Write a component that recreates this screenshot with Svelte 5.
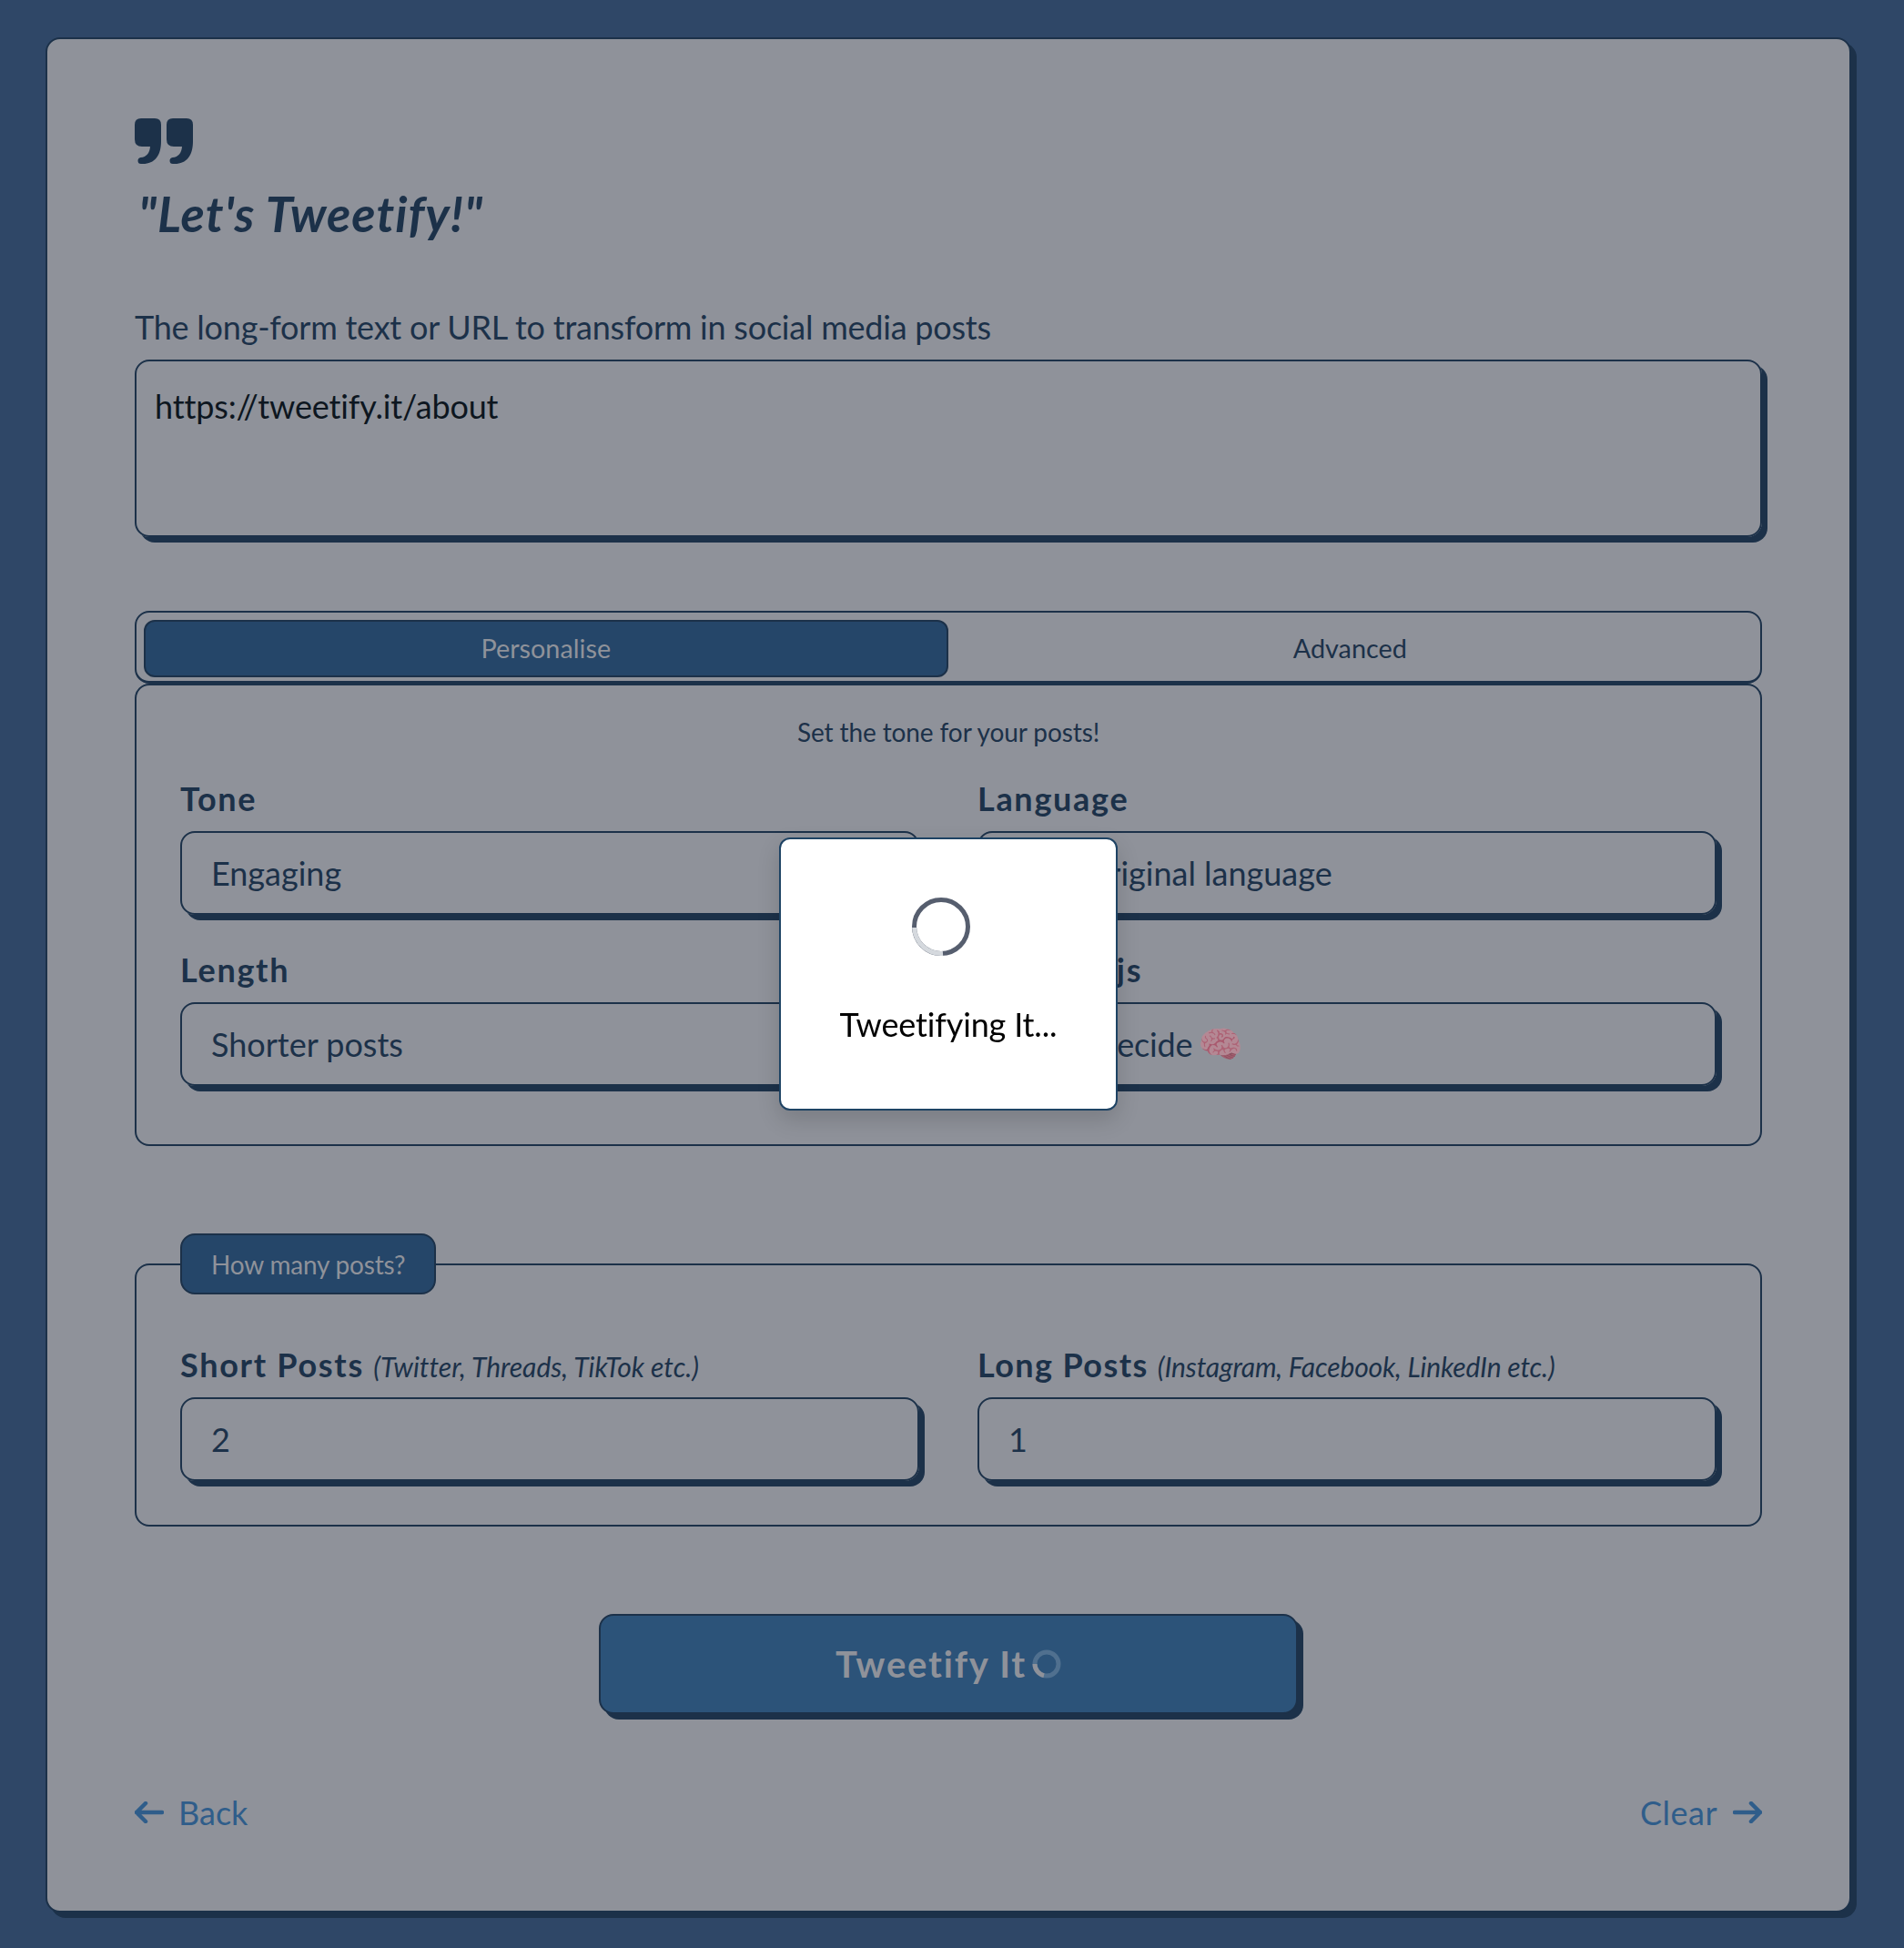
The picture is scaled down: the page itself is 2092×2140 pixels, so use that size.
<script>
	let source = $state('https://tweetify.it/about')
	let shortPosts = $state(2)
	let longPosts = $state(1)
	const selects = [
		{ label: 'Tone', value: 'Engaging' },
		{ label: 'Language', value: 'Keep original language' },
		{ label: 'Length', value: 'Shorter posts' },
		{ label: 'Use Emojs', value: 'Let AI decide', emoji: '🧠' }
	]
</script>

<main>
	<section class="card">
		<svg class="quote" viewBox="0 0 64 50" aria-hidden="true">
			<path d="M7 0H22Q29 0 29 7V25C29 41 22 50 9 50H7Q3.5 50 3.5 46.5Q3.5 43.5 6.5 43C13 42.5 16.5 38 17 31H8Q0 31 0 23V7Q0 0 7 0Z" />
			<path transform="translate(35)" d="M7 0H22Q29 0 29 7V25C29 41 22 50 9 50H7Q3.5 50 3.5 46.5Q3.5 43.5 6.5 43C13 42.5 16.5 38 17 31H8Q0 31 0 23V7Q0 0 7 0Z" />
		</svg>
		<h1>"Let's Tweetify!"</h1>

		<label class="source">
			<span>The long-form text or URL to transform in social media posts</span>
			<textarea bind:value={source}></textarea>
		</label>

		<div class="tabs">
			<button class="tab active">Personalise</button>
			<button class="tab">Advanced</button>
		</div>
		<div class="panel">
			<p>Set the tone for your posts!</p>
			<div class="grid">
				{#each selects as s}
					<div class="field">
						<span class="label">{s.label}</span>
						<div class="control" class:tight={s.emoji}>
							{s.value}
							{#if s.emoji}<span class="emoji">{s.emoji}</span>{/if}
						</div>
					</div>
				{/each}
			</div>
		</div>

		<fieldset>
			<legend>How many posts?</legend>
			<div class="grid">
				<label class="field">
					<span class="label">Short Posts <em>(Twitter, Threads, TikTok etc.)</em></span>
					<input class="control" type="text" bind:value={shortPosts} />
				</label>
				<label class="field">
					<span class="label long">Long Posts <em>(Instagram, Facebook, LinkedIn etc.)</em></span>
					<input class="control" type="text" bind:value={longPosts} />
				</label>
			</div>
		</fieldset>

		<button class="submit">
			Tweetify It
			<svg class="mini" viewBox="0 0 32 32" aria-hidden="true">
				<circle cx="16" cy="16" r="13" />
				<path d="M3 16A13 13 0 0 0 13 28.6" />
			</svg>
		</button>

		<nav>
			<a href="#back">
				<svg viewBox="0 0 32 24" aria-hidden="true"><path d="M2 12H30M12 2L2 12L12 22" /></svg>
				Back
			</a>
			<a href="#clear" class="clear">
				Clear
				<svg viewBox="0 0 32 24" aria-hidden="true"><path d="M2 12H30M20 2L30 12L20 22" /></svg>
			</a>
		</nav>
	</section>
</main>

<div class="overlay">
	<div class="popup">
		<svg class="spinner" viewBox="0 0 64 64" aria-hidden="true">
			<circle cx="32" cy="32" r="29.5" class="track" />
			<path d="M34 61.4A29.5 29.5 0 0 1 2.6 33" class="arc" />
		</svg>
		<span>Tweetifying It...</span>
	</div>
</div>

<style>
	:global(body) {
		background: #2f4767;
		font-family: Lato, "Open Sans", sans-serif;
		font-variant-ligatures: none;
		color: #1c3149;
	}

	main {
		padding: 41px 58px 31px 50px;
	}

	.card {
		display: flex;
		flex-direction: column;
		height: 2060px;
		box-sizing: border-box;
		padding: 87px 96px 0;
		background: #8f929a;
		border: 2px solid #1c3149;
		border-radius: 16px;
		box-shadow: 6px 6px 0 #1c3149;
	}

	.quote {
		width: 64px;
		height: 50px;
		fill: #1c3149;
	}

	h1 {
		margin: 25px 0 0 4px;
		font-size: 54px;
		line-height: 60px;
		font-weight: 700;
		font-style: italic;
		letter-spacing: 1px;
	}

	.source {
		display: flex;
		flex-direction: column;
		margin-top: 72px;
		font-size: 36px;
	}

	.source span {
		line-height: 44px;
		margin-bottom: 14px;
		letter-spacing: -0.23px;
	}

	textarea {
		height: 195px;
		box-sizing: border-box;
		padding: 27px 20px;
		background: transparent;
		border: 2px solid #1c3149;
		border-radius: 16px;
		box-shadow: 6px 6px 0 #1c3149;
		font: inherit;
		letter-spacing: -0.15px;
		line-height: 44px;
		color: #0d1620;
		resize: none;
		outline: none;
	}

	.tabs {
		display: flex;
		height: 80px;
		margin-top: 81px;
		box-sizing: border-box;
		padding: 8px 9px 4px 8px;
		border: 2px solid #1c3149;
		border-bottom-width: 3px;
		border-radius: 16px;
	}

	.tab {
		flex: 1;
		padding: 0 0 2px;
		background: transparent;
		border: 2px solid transparent;
		border-radius: 12px;
		font: inherit;
		font-size: 28.8px;
		color: #1c3149;
	}

	.tab.active {
		background: #254669;
		border-color: #1c3149;
		color: #8f929a;
	}

	.panel {
		box-sizing: border-box;
		height: 508px;
		padding: 0 48px;
		border: 2px solid #1c3149;
		border-radius: 16px;
	}

	.panel p {
		margin: 33px 0 33px;
		font-size: 28px;
		line-height: 36px;
		letter-spacing: -0.1px;
		text-align: center;
	}

	.panel .grid {
		row-gap: 38px;
	}

	.grid {
		display: grid;
		grid-template-columns: 812px 812px;
		column-gap: 64px;
	}

	.field {
		display: flex;
		flex-direction: column;
	}

	.label {
		font-size: 36px;
		line-height: 44px;
		font-weight: 700;
		letter-spacing: 1.7px;
		margin-bottom: 14px;
	}

	.label em {
		font-size: 30px;
		font-weight: 400;
		letter-spacing: 0;
	}

	.label.long {
		letter-spacing: 1.4px;
	}

	.label.long em {
		letter-spacing: -0.15px;
	}

	fieldset .label {
		margin-bottom: 12px;
	}

	.control {
		display: flex;
		align-items: center;
		height: 92px;
		box-sizing: border-box;
		padding: 0 32px;
		background: transparent;
		border: 2px solid #1c3149;
		border-radius: 16px;
		box-shadow: 6px 6px 0 #1c3149;
		font: inherit;
		font-size: 36px;
		color: #1c3149;
		outline: none;
		width: 100%;
		white-space: pre;
	}

	.control.tight {
		letter-spacing: -0.2px;
	}

	.emoji {
		margin-left: -3px;
		font-size: 40px;
		opacity: 0.75;
		filter: brightness(0.75) hue-rotate(-15deg);
		font-family: "Noto Color Emoji", sans-serif;
	}

	fieldset {
		position: relative;
		height: 289px;
		box-sizing: border-box;
		margin: 129px 0 0;
		padding: 87px 48px 0;
		border: 2px solid #1c3149;
		border-radius: 16px;
		min-width: 0;
	}

	legend {
		position: absolute;
		left: 48px;
		top: -35px;
		padding: 0 32px;
		height: 67px;
		box-sizing: border-box;
		display: flex;
		align-items: center;
		background: #254669;
		border: 2px solid #1c3149;
		border-radius: 16px;
		font-size: 28px;
		letter-spacing: -0.2px;
		color: #8f929a;
	}

	.submit {
		display: flex;
		align-items: center;
		justify-content: center;
		gap: 6px;
		width: 768px;
		height: 110px;
		margin: 96px auto 0;
		background: #2c5379;
		border: 2px solid #1c3149;
		border-radius: 16px;
		box-shadow: 6px 6px 0 #1c3149;
		font: inherit;
		font-size: 40px;
		font-weight: 700;
		letter-spacing: 1.8px;
		color: #8f929a;
	}

	.mini {
		width: 32px;
		height: 32px;
		fill: none;
		stroke: #50708f;
		stroke-width: 5;
	}

	.mini path {
		stroke: #8f929a;
	}

	nav {
		display: flex;
		justify-content: space-between;
		margin-top: 86px;
	}

	nav a {
		display: flex;
		align-items: center;
		gap: 16px;
		font-size: 36px;
		line-height: 44px;
		color: #2f5d8a;
		text-decoration: none;
	}

	nav a.clear {
		gap: 17px;
		letter-spacing: 0.5px;
	}

	nav svg {
		width: 32px;
		height: 24px;
		fill: none;
		stroke: #2f5d8a;
		stroke-width: 4.5;
		stroke-linecap: round;
		stroke-linejoin: round;
	}

	.overlay {
		position: fixed;
		inset: 0;
		display: flex;
		align-items: center;
		justify-content: center;
		padding-right: 8px;
	}

	.popup {
		display: flex;
		flex-direction: column;
		align-items: center;
		width: 372px;
		height: 300px;
		box-sizing: border-box;
		padding-top: 64px;
		background: #fff;
		border: 2px solid #1e4364;
		border-radius: 12px;
		box-shadow: 0 10px 25px rgba(0, 0, 0, 0.15);
		font-size: 36px;
		color: #000;
	}

	.popup span {
		margin-top: 53px;
		line-height: 44px;
		letter-spacing: -0.15px;
	}

	.spinner {
		width: 64px;
		height: 64px;
		margin-left: -16px;
		fill: none;
		stroke-width: 5;
	}

	.track {
		stroke: #565e6e;
	}

	.arc {
		stroke: #d5d9de;
	}
</style>
